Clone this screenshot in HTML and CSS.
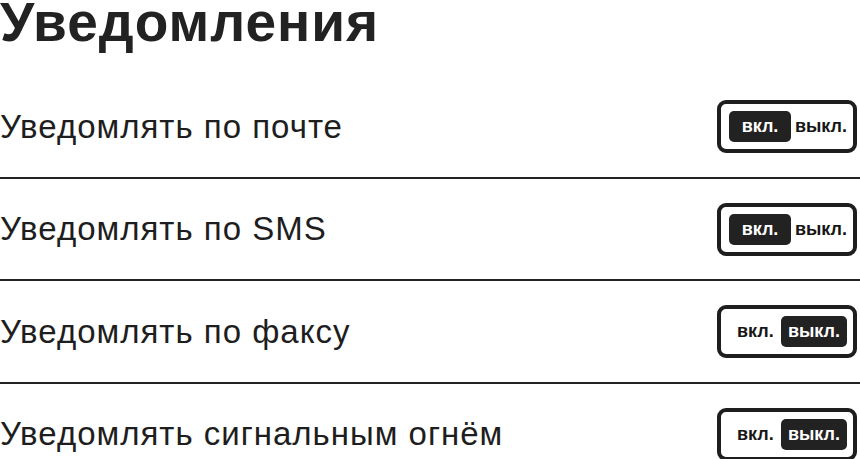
FILE: index.html
```html
<!DOCTYPE html>
<html lang="ru">
<head>
<meta charset="utf-8">
<title>Уведомления</title>
<link rel="stylesheet" href="styles.css">
</head>
<body>
<main class="page">
  <h1 class="title">Уведомления</h1>
  <ul class="list">
    <li class="row">
      <span class="label">Уведомлять по почте</span>
      <div class="toggle">
        <span class="seg seg-on active">вкл.</span>
        <span class="seg seg-off">выкл.</span>
      </div>
    </li>
    <li class="row">
      <span class="label">Уведомлять по SMS</span>
      <div class="toggle">
        <span class="seg seg-on active">вкл.</span>
        <span class="seg seg-off">выкл.</span>
      </div>
    </li>
    <li class="row">
      <span class="label">Уведомлять по факсу</span>
      <div class="toggle">
        <span class="seg seg-on">вкл.</span>
        <span class="seg seg-off active">выкл.</span>
      </div>
    </li>
    <li class="row">
      <span class="label">Уведомлять сигнальным огнём</span>
      <div class="toggle">
        <span class="seg seg-on">вкл.</span>
        <span class="seg seg-off active">выкл.</span>
      </div>
    </li>
  </ul>
</main>
</body>
</html>
```

FILE: styles.css
```css
html, body {
  margin: 0;
  padding: 0;
  background: #ffffff;
}

.page {
  width: 860px;
  font-family: "Liberation Sans", Arial, sans-serif;
  color: #222222;
}

.title {
  margin: 0 0 32px 0;
  font-size: 55px;
  line-height: 44px;
  letter-spacing: 1px;
  font-weight: 700;
  color: #222222;
}

.list {
  list-style: none;
  margin: 0;
  padding: 0;
}

.row {
  display: flex;
  align-items: center;
  justify-content: space-between;
  padding: 24px 3px 23.5px 0;
  border-bottom: 2px solid #222222;
}

.row:last-child {
  border-bottom: none;
}

.label {
  font-size: 33px;
  line-height: 36px;
  letter-spacing: 1px;
  color: #1e1e1e;
}

.toggle {
  box-sizing: border-box;
  width: 140px;
  height: 53px;
  border: 4px solid #1e1e1e;
  border-radius: 9px;
  display: flex;
  align-items: center;
  justify-content: space-between;
  padding: 0 6px 0 8px;
}

.seg {
  font-size: 18px;
  font-weight: 700;
  line-height: 31px;
  height: 31px;
  color: #161616;
}

.seg-on {
  padding-left: 8px;
}

.seg-on.active {
  padding: 0;
  width: 62px;
  text-align: center;
}

.seg-off.active {
  padding: 0 7px;
}

.active {
  background: #222222;
  color: #ffffff;
  border-radius: 5px;
}
```
